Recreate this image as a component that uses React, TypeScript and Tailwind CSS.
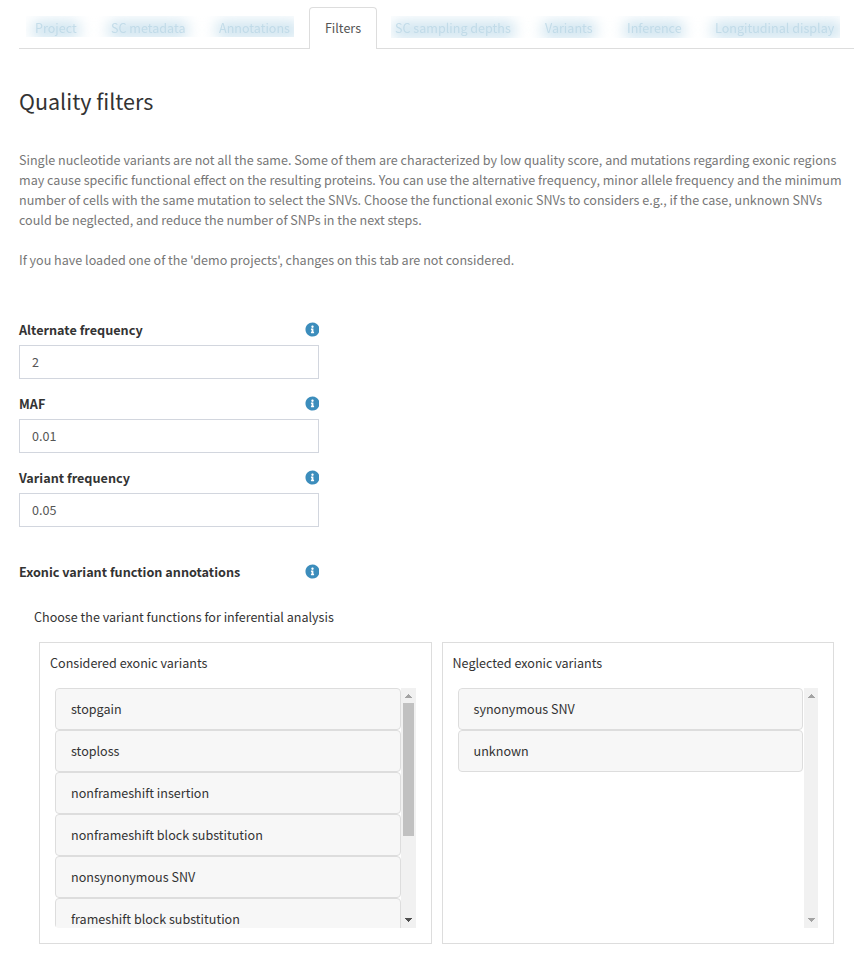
import React from "react";
import { FaInfoCircle } from "react-icons/fa";

function Tab({ label, className, glow }: { label: string; className: string; glow: string }) {
  return (
    <a className={`relative shrink-0 whitespace-nowrap text-[#b9d6e5] ${className}`}>
      <span className={`absolute top-[3px] -left-[3px] h-[18px] rounded-[6px] bg-[#d0e5f0] blur-[7px] ${glow}`} />
      <span className="relative opacity-75 blur-[0.6px]">{label}</span>
    </a>
  );
}

function Arrow({ up = false, dark = false }: { up?: boolean; dark?: boolean }) {
  return (
    <svg width="7" height="4" viewBox="0 0 7 4" shapeRendering="crispEdges" className={dark ? "text-[#505050]" : "text-[#a3a3a3]"}>
      <path d={up ? "M3 0h1v1h1v1h1v1h1v1H0V3h1V2h1V1h1z" : "M0 0h7v1H6v1H5v1H4v1H3V3H2V2H1V1H0z"} fill="currentColor" />
    </svg>
  );
}

function Label({ text }: { text: string }) {
  return (
    <div className="flex h-5 w-[300px] items-start justify-between">
      <label className="text-[12.65px] font-bold whitespace-nowrap">{text}</label>
      <FaInfoCircle size={15} className="mt-[2px] -mr-[0.5px] p-[0.25px] text-[#3c8dbc]" />
    </div>
  );
}

function Field({ label, value }: { label: string; value: string }) {
  return (
    <div className="mb-[15px]">
      <Label text={label} />
      <input
        defaultValue={value}
        className="mt-[5px] block h-[34px] w-[300px] border border-[#d2d6de] bg-white px-3 pb-px text-[#555] outline-none"
      />
    </div>
  );
}

function Panel({ title, items, scrollable = false, className }: { title: string; items: string[]; scrollable?: boolean; className: string }) {
  return (
    <section className={`h-[302px] border border-[#ddd] pt-[10px] ${className}`}>
      <h3 className={`leading-5 ${scrollable ? "pl-[10px]" : "pl-[9.5px]"}`}>{title}</h3>
      <div className="mt-[15px] mr-[15px] ml-[15px] flex h-[240px] overflow-hidden rounded-l">
        <div className="min-w-0 flex-1">
          {items.map((item) => (
            <div
              key={item}
              className={`h-[42px] rounded-[4px] border border-[#ddd] bg-[#f7f7f7] py-[10px] leading-5 ${scrollable ? "px-[15px]" : "px-[14.5px]"}`}
            >
              {item}
            </div>
          ))}
        </div>
        <div className={`flex flex-col items-center bg-[#f1f1f1] py-[6px] ${scrollable ? "w-[15px]" : "ml-px w-[14px]"}`}>
          <Arrow up />
          {scrollable && <div className="mt-[5px] h-[133px] w-[11px] bg-[#c1c1c1]" />}
          <div className="mt-auto">
            <Arrow dark={scrollable} />
          </div>
        </div>
      </div>
    </section>
  );
}

export default function App() {
  return (
    <main className="h-[960px] w-[862px] overflow-hidden bg-white pt-[7px] pl-[19px] font-['Noto_Sans_CJK_SC',sans-serif] text-[12.575px] leading-5 text-[#333]">
      <nav className="flex h-[42px] w-[835px]">
        <div className="flex w-[290px] border-b border-[#ddd] pt-[9px] pl-[7px]">
          <div className="flex h-[21px] w-[268px] overflow-hidden pt-[2px] pl-[9px]">
            <Tab label="Project" className="w-[76px]" glow="w-[48px]" />
            <Tab label="SC metadata" className="w-[108px]" glow="w-[80px]" />
            <Tab label="Annotations" className="w-[80px]" glow="w-[84px]" />
          </div>
        </div>
        <div className="flex w-[68px] justify-center rounded-t-[4px] border border-b-0 border-[#ddd] pt-[10px] text-[#555]">Filters</div>
        <div className="flex flex-1 border-b border-[#ddd] pt-[9px] pl-[14px]">
          <div className="flex h-[22px] w-[449px] overflow-hidden pt-[2px] pl-[4px]">
            <Tab label="SC sampling depths" className="w-[150px]" glow="w-[123px]" />
            <Tab label="Variants" className="w-[82px]" glow="w-[54px]" />
            <Tab label="Inference" className="w-[88px]" glow="w-[60px]" />
            <Tab label="Longitudinal display" className="w-[130px]" glow="w-[130px]" />
          </div>
        </div>
      </nav>

      <h1 className="mt-[38.5px] h-[26px] text-[21.5px] leading-[26px]">Quality filters</h1>

      <div className="mt-[36.5px] whitespace-nowrap text-[#777]">
        <p>
          Single nucleotide variants are not all the same. Some of them are characterized by low quality score, and mutations regarding exonic regions
          <br />
          may cause specific functional effect on the resulting proteins. You can use the alternative frequency, minor allele frequency and the minimum
          <br />
          number of cells with the same mutation to select the SNVs. Choose the functional exonic SNVs to considers e.g., if the case, unknown SNVs
          <br />
          could be neglected, and reduce the number of SNPs in the next steps.
        </p>
        <p className="mt-5">If you have loaded one of the 'demo projects', changes on this tab are not considered.</p>
      </div>

      <div className="mt-[50px]">
        <Field label="Alternate frequency" value="2" />
        <Field label="MAF" value="0.01" />
        <Field label="Variant frequency" value="0.05" />
      </div>
      <div className="mt-[35px]">
        <Label text="Exonic variant function annotations" />
      </div>

      <p className="mt-[25px] ml-[15px]">Choose the variant functions for inferential analysis</p>
      <div className="mt-[15px] ml-5 flex gap-[10px]">
        <Panel
          title="Considered exonic variants"
          className="w-[393px]"
          scrollable
          items={["stopgain", "stoploss", "nonframeshift insertion", "nonframeshift block substitution", "nonsynonymous SNV", "frameshift block substitution"]}
        />
        <Panel title="Neglected exonic variants" className="w-[392px]" items={["synonymous SNV", "unknown"]} />
      </div>
    </main>
  );
}
